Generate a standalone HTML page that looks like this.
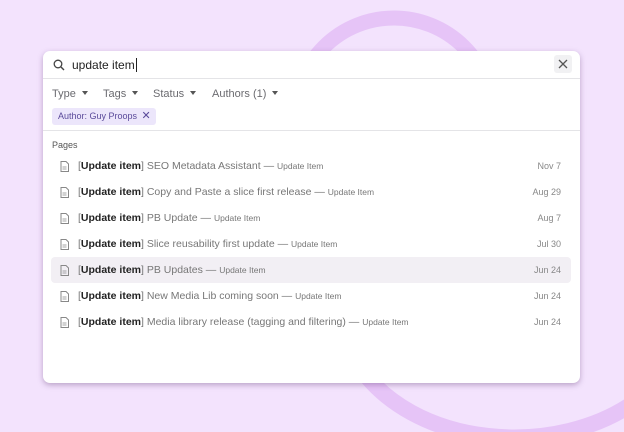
<!DOCTYPE html>
<html><head><style>
*{margin:0;padding:0;box-sizing:border-box}
body{width:624px;height:432px;background:#f3e3fd;font-family:"Liberation Sans",sans-serif;position:relative;overflow:hidden}
svg.bg{position:absolute;left:0;top:0}
.card{position:absolute;left:43px;top:51px;width:537px;height:332px;background:#fff;border-radius:7px;box-shadow:0 2px 6px rgba(80,40,100,.35)}
.search{height:28px;border-bottom:1px solid #e4e4e7;position:relative}
.search .q{position:absolute;left:29px;top:7px;font-size:12px;color:#222}
.x{position:absolute;right:8px;top:4px;width:18px;height:18px;background:#f1f1f3;border-radius:3px}
.filters{height:52px;border-bottom:1px solid #e4e4e7;position:relative;font-size:11px;color:#6b6b70}
.f{position:absolute;top:9px}
.f:after{content:"";display:inline-block;margin-left:6px;border-left:3.5px solid transparent;border-right:3.5px solid transparent;border-top:4px solid #555;vertical-align:2px}
.chip{position:absolute;left:9px;top:29px;height:17px;padding:0 5px 0 6px;background:#ece6fb;border-radius:3px;font-size:9px;color:#5a4a9a;line-height:17px}
.lbl{position:absolute;left:9px;top:89px;font-size:9px;color:#555}
.row{position:absolute;left:8px;width:520px;height:26px;font-size:10.5px;color:#777;line-height:26px;border-radius:4px}
.row.hl{background:#f2eff4}
.row svg{position:absolute;left:9px;top:8px}
.row .t{position:absolute;left:27px}
.row b{color:#222;font-weight:bold}
.row small{font-size:8.5px;color:#777}
.row .d{position:absolute;right:10px;font-size:9px;color:#888}
</style></head><body>
<svg class="bg" width="624" height="432"><circle cx="394" cy="117" r="99" fill="none" stroke="#e6c4f7" stroke-width="15"/><path d="M355 360 C410 450,560 460,640 398" fill="none" stroke="#e6c4f7" stroke-width="16"/></svg>
<div class="card">
<div class="search">
<svg style="position:absolute;left:10px;top:8px" width="12" height="12" viewBox="0 0 12 12"><circle cx="5" cy="5" r="3.8" fill="none" stroke="#444" stroke-width="1.3"/><path d="M8 8L11 11" stroke="#444" stroke-width="1.4"/></svg>
<span class="q">update item<span style="border-left:1px solid #222;margin-left:1px"></span></span>
<div class="x"><svg width="18" height="18" viewBox="0 0 18 18"><path d="M5 5L13 13M13 5L5 13" stroke="#555" stroke-width="1.3"/></svg></div>
</div>
<div class="filters">
<span class="f" style="left:9px">Type</span><span class="f" style="left:60px">Tags</span><span class="f" style="left:110px">Status</span><span class="f" style="left:169px">Authors (1)</span>
<div class="chip">Author: Guy Proops <span style="font-size:11px;margin-left:2px">✕</span></div>
</div>
<div class="lbl">Pages</div>
<div class="row" style="top:102px"><svg width="9" height="11" viewBox="0 0 9 11"><path d="M1 .5h5l2.5 2.5v7.5H1z" fill="none" stroke="#888"/><path d="M2.5 6h4M2.5 8h4" stroke="#888" stroke-width=".8"/></svg><span class="t">[<b>Update item</b>] SEO Metadata Assistant — <small>Update Item</small></span><span class="d">Nov 7</span></div>
<div class="row" style="top:128px"><svg width="9" height="11" viewBox="0 0 9 11"><path d="M1 .5h5l2.5 2.5v7.5H1z" fill="none" stroke="#888"/><path d="M2.5 6h4M2.5 8h4" stroke="#888" stroke-width=".8"/></svg><span class="t">[<b>Update item</b>] Copy and Paste a slice first release — <small>Update Item</small></span><span class="d">Aug 29</span></div>
<div class="row" style="top:154px"><svg width="9" height="11" viewBox="0 0 9 11"><path d="M1 .5h5l2.5 2.5v7.5H1z" fill="none" stroke="#888"/><path d="M2.5 6h4M2.5 8h4" stroke="#888" stroke-width=".8"/></svg><span class="t">[<b>Update item</b>] PB Update — <small>Update Item</small></span><span class="d">Aug 7</span></div>
<div class="row" style="top:180px"><svg width="9" height="11" viewBox="0 0 9 11"><path d="M1 .5h5l2.5 2.5v7.5H1z" fill="none" stroke="#888"/><path d="M2.5 6h4M2.5 8h4" stroke="#888" stroke-width=".8"/></svg><span class="t">[<b>Update item</b>] Slice reusability first update — <small>Update Item</small></span><span class="d">Jul 30</span></div>
<div class="row hl" style="top:206px"><svg width="9" height="11" viewBox="0 0 9 11"><path d="M1 .5h5l2.5 2.5v7.5H1z" fill="none" stroke="#888"/><path d="M2.5 6h4M2.5 8h4" stroke="#888" stroke-width=".8"/></svg><span class="t">[<b>Update item</b>] PB Updates — <small>Update Item</small></span><span class="d">Jun 24</span></div>
<div class="row" style="top:232px"><svg width="9" height="11" viewBox="0 0 9 11"><path d="M1 .5h5l2.5 2.5v7.5H1z" fill="none" stroke="#888"/><path d="M2.5 6h4M2.5 8h4" stroke="#888" stroke-width=".8"/></svg><span class="t">[<b>Update item</b>] New Media Lib coming soon — <small>Update Item</small></span><span class="d">Jun 24</span></div>
<div class="row" style="top:258px"><svg width="9" height="11" viewBox="0 0 9 11"><path d="M1 .5h5l2.5 2.5v7.5H1z" fill="none" stroke="#888"/><path d="M2.5 6h4M2.5 8h4" stroke="#888" stroke-width=".8"/></svg><span class="t">[<b>Update item</b>] Media library release (tagging and filtering) — <small>Update Item</small></span><span class="d">Jun 24</span></div>
</div>
</body></html>
